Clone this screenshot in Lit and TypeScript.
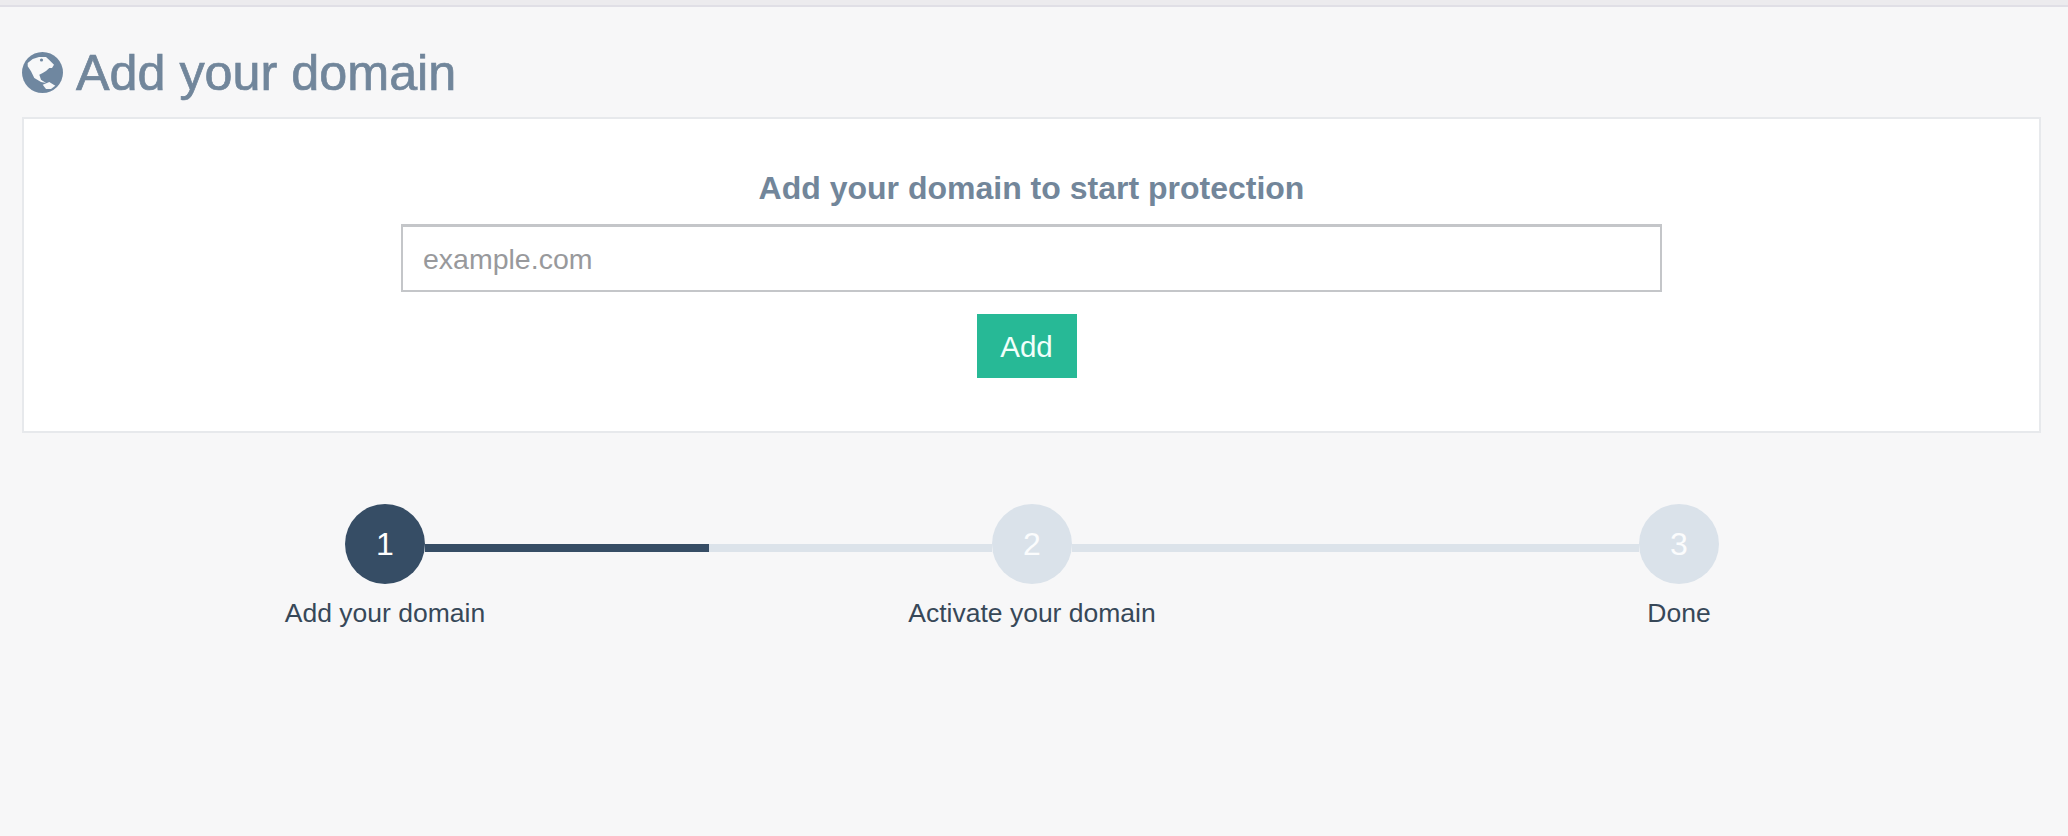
import { LitElement, html, css } from "lit";
import { customElement } from "lit/decorators.js";

const steps = [
  { n: 1, label: "Add your domain", active: true },
  { n: 2, label: "Activate your domain", active: false },
  { n: 3, label: "Done", active: false },
];

@customElement("app-root")
export class AppRoot extends LitElement {
  static styles = css`
    :host {
      display: block;
      min-height: 836px;
      background: #f7f7f8;
      font-family: "Liberation Sans", Arial, sans-serif;
      box-sizing: border-box;
    }
    .topbar {
      height: 7px;
      background: #ecebee;
      border-bottom: 2px solid #e0dfe6;
      box-sizing: border-box;
    }
    .page {
      padding: 0 27px 0 22px;
    }
    .title {
      display: flex;
      align-items: center;
      gap: 13px;
      height: 110px;
      margin: 0;
      color: #71869b;
      font-size: 50.3px;
      font-weight: 400;
      -webkit-text-stroke: 0.7px #71869b;
      box-sizing: border-box;
      padding-top: 20px;
    }
    .globe {
      width: 41px;
      height: 41px;
      flex: none;
    }
    .card {
      height: 316px;
      background: #fff;
      border: 2px solid #e7e9ec;
      box-sizing: border-box;
      display: flex;
      flex-direction: column;
      align-items: center;
    }
    .card h2 {
      margin: 51px 0 0;
      height: 54px;
      color: #72869a;
      font-size: 32px;
      line-height: 36px;
      font-weight: 700;
    }
    .input {
      width: 1261px;
      height: 68px;
      box-sizing: border-box;
      border: 2px solid #c4c6c9;
      border-top-width: 3px;
      background: #fff;
      padding: 2px 20px 0;
      font: 28.5px "Liberation Sans", Arial, sans-serif;
      color: #333;
      outline: none;
      border-radius: 0;
      display: block;
    }
    .input::placeholder {
      color: #98999c;
      opacity: 1;
    }
    .btn {
      margin: 22px 0 0 -10px;
      width: 100px;
      height: 64px;
      border: none;
      background: #27b996;
      color: #f1fffb;
      font: 29.5px "Liberation Sans", Arial, sans-serif;
      padding: 2px 0 0;
      border-radius: 0;
    }
    .steps {
      display: grid;
      grid-template-columns: repeat(3, 647px);
      justify-content: center;
      margin: 71px 0 0 15px;
      width: 1990px;
    }
    .step {
      display: flex;
      flex-direction: column;
      align-items: stretch;
    }
    .head {
      display: flex;
      align-items: center;
      height: 80px;
    }
    .seg {
      flex: 1;
      height: 8px;
      margin-top: 8px;
      background: #dce3ea;
    }
    .seg.dark {
      background: #364d65;
    }
    .seg.none {
      background: transparent;
    }
    .circle {
      width: 80px;
      height: 80px;
      border-radius: 50%;
      background: #dae2ea;
      color: #fbfcfd;
      display: flex;
      align-items: center;
      justify-content: center;
      font-size: 32px;
      flex: none;
    }
    .circle.on {
      background: #364d65;
      color: #fff;
    }
    .label {
      margin-top: 12px;
      text-align: center;
      color: #374858;
      font-size: 26.5px;
      line-height: 34px;
    }
  `;

  private globe() {
    return html`<svg class="globe" viewBox="0 0 41 41" aria-hidden="true">
      <circle cx="20.5" cy="20.5" r="20.5" fill="#6f87a0"></circle>
      <path
        fill="#f7f8f9"
        d="M5.7 11 L10.7 7 L17 5 L24 5 L27 7.7 L32 12.7 L30 16 L27.3 16 L24 19 L20.7 21 L17.3 22.7 L19 27.7 L24 31 L19 30 L12.3 26 L9 19.3 L5.7 14.3 Z"
      ></path>
      <path
        fill="#f7f8f9"
        d="M20.7 32.7 L27.3 30 L33.3 33.7 L29 37 L24 37 Z"
      ></path>
      <circle cx="19.5" cy="8" r="1.6" fill="#6f87a0"></circle>
      <circle cx="20.7" cy="26" r="1.6" fill="#6f87a0"></circle>
    </svg>`;
  }

  render() {
    return html`
      <div class="topbar"></div>
      <div class="page">
        <h1 class="title">${this.globe()}<span>Add your domain</span></h1>
        <section class="card">
          <h2>Add your domain to start protection</h2>
          <input class="input" type="text" placeholder="example.com" />
          <button class="btn">Add</button>
        </section>
        <div class="steps">
          ${steps.map(
            (s, i) => html`
              <div class="step">
                <div class="head">
                  <div class="seg ${i === 0 ? "none" : ""}"></div>
                  <div class="circle ${s.active ? "on" : ""}">${s.n}</div>
                  <div
                    class="seg ${i === steps.length - 1
                      ? "none"
                      : s.active
                        ? "dark"
                        : ""}"
                  ></div>
                </div>
                <div class="label">${s.label}</div>
              </div>
            `
          )}
        </div>
      </div>
    `;
  }
}
